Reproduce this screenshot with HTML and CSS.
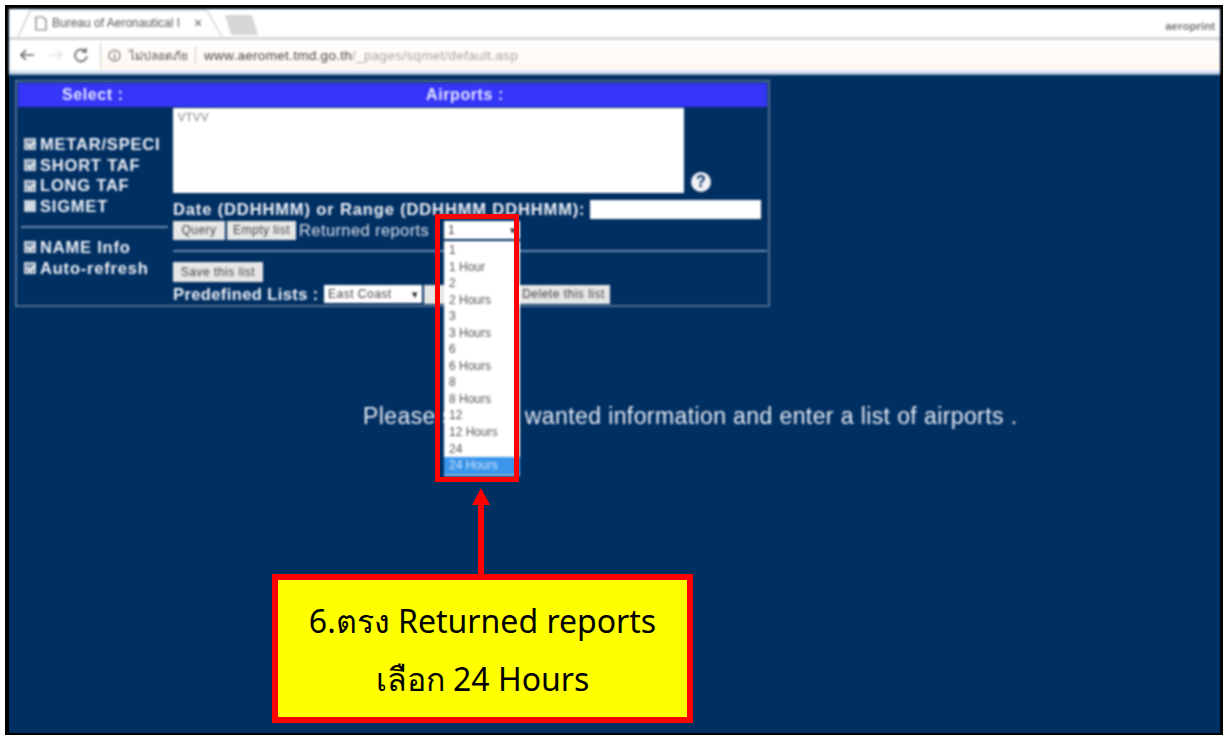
FILE: index.html
```html
<!DOCTYPE html>
<html lang="en">
<head>
<meta charset="utf-8">
<title>Bureau of Aeronautical Information</title>
<link rel="stylesheet" href="styles.css">
</head>
<body>
<div class="screen">
  <header class="browser soft">
    <div class="tabstrip">
      <div class="tab">
        <svg class="tab-shape" width="206" height="28" viewBox="0 0 206 28"><path d="M1 28 L13 2 Q14 1 16 1 H188 Q190 1 191 3 L205 28" fill="#fff" stroke="#d4d4d4" stroke-width="1.5"/></svg>
        <svg class="tab-page" width="12" height="15" viewBox="0 0 12 15"><path d="M1 1 H8 L11 4 V14 H1 Z" fill="#fff" stroke="#777" stroke-width="1.2"/></svg>
        <span class="tab-title">Bureau of Aeronautical I</span>
        <span class="tab-close">×</span>
      </div>
      <div class="newtab"></div>
      <span class="profile">aeroprint</span>
    </div>
    <div class="toolbar">
      <svg class="nav-icon back" width="18" height="14" viewBox="0 0 18 14"><path d="M16 7 H3 M8 2 L3 7 L8 12" fill="none" stroke="#666" stroke-width="1.7"/></svg>
      <svg class="nav-icon forward" width="18" height="14" viewBox="0 0 18 14"><path d="M2 7 H15 M10 2 L15 7 L10 12" fill="none" stroke="#e2e2e2" stroke-width="1.7"/></svg>
      <svg class="nav-icon" width="16" height="16" viewBox="0 0 16 16"><path d="M13 5 A6 6 0 1 0 14 9 M13 1 V5 H9" fill="none" stroke="#666" stroke-width="1.6"/></svg>
      <div class="omnibox">
        <svg width="13" height="13" viewBox="0 0 13 13"><circle cx="6.5" cy="6.5" r="5.5" fill="none" stroke="#666" stroke-width="1.1"/><path d="M6.5 5.5 V10 M6.5 3 V4.2" stroke="#666" stroke-width="1.3"/></svg>
        <span class="security">ไม่ปลอดภัย</span>
        <span class="url"><b>www.aeromet.tmd.go.th</b>/_pages/sqmet/default.asp</span>
      </div>
    </div>
  </header>

  <main class="page">
    <form class="panel soft">
      <div class="panel-head"><span class="head-select">Select :</span><span class="head-airports">Airports :</span></div>
      <div class="panel-body">
        <div class="options">
          <div class="opt-group first">
            <label class="opt"><i class="check on"></i>METAR/SPECI</label>
            <label class="opt"><i class="check on"></i>SHORT TAF</label>
            <label class="opt"><i class="check on"></i>LONG TAF</label>
            <label class="opt"><i class="check"></i>SIGMET</label>
          </div>
          <div class="opt-group">
            <label class="opt"><i class="check on"></i>NAME Info</label>
            <label class="opt"><i class="check on"></i>Auto-refresh</label>
          </div>
        </div>
        <div class="fields">
          <div class="airport-row">
            <div class="airports">VTVV</div>
            <span class="help">?</span>
          </div>
          <div class="date-row"><span>Date (DDHHMM) or Range (DDHHMM DDHHMM):</span><span class="date-input"></span></div>
          <div class="query-row">
            <span class="btn query">Query</span><span class="btn empty">Empty list</span>
            <span class="returned">Returned reports :</span>
            <span class="select returned-select">1<em>▾</em></span>
          </div>
          <div class="save-row"><span class="btn save">Save this list</span></div>
          <div class="lists-row">
            <span class="lists-label">Predefined Lists :</span>
            <span class="select east">East Coast<em>▾</em></span>
            <span class="btn add">Add</span>
            <span class="btn delete">Delete this list</span>
          </div>
        </div>
      </div>
    </form>
    <p class="notice soft"><span class="lead">Please select</span> wanted information and enter a list of airports .</p>
  </main>

  <ul class="dropdown soft">
    <li>1</li><li>1 Hour</li><li>2</li><li>2 Hours</li><li>3</li><li>3 Hours</li><li>6</li>
    <li>6 Hours</li><li>8</li><li>8 Hours</li><li>12</li><li>12 Hours</li><li>24</li><li class="picked">24 Hours</li>
  </ul>
  <div class="marker"></div>
  <svg class="arrow" width="20" height="88" viewBox="0 0 20 88"><path d="M10 0 L19 17 H13 V88 H7 V17 H1 Z" fill="#f00"/></svg>
  <div class="callout">
    <p>6.ตรง Returned reports</p>
    <p>เลือก 24 Hours</p>
  </div>
</div>
</body>
</html>
```

FILE: styles.css
```css
* { box-sizing: border-box; }
html, body { margin: 0; height: 100%; background: #fff; overflow: hidden; }
body { font-family: "Liberation Sans", Arial, sans-serif; }

.screen {
  position: relative;
  display: flex;
  flex-direction: column;
  width: 1218px;
  height: 730px;
  margin: 5px 0 0 5px;
  border: solid #000;
  border-width: 4px 3px 2px 4px;
  background: #002f62;
}

.soft { filter: blur(0.8px); }

/* browser window top */
.browser { flex: none; height: 66px; background: #fff; }
.tabstrip { position: relative; display: flex; align-items: flex-end; height: 31px; border-bottom: 3px solid #d6d6d6; }
.tab { position: relative; display: flex; align-items: center; width: 206px; height: 28px; margin-left: 8px; padding-left: 18px; }
.tab-shape { position: absolute; left: 0; top: 0; }
.tab-page { position: relative; margin-right: 5px; }
.tab-title { position: relative; width: 127px; overflow: hidden; white-space: nowrap; font-size: 12px; color: #555; }
.tab-close { position: relative; margin-left: 15px; font-size: 14px; color: #555; }
.newtab { width: 27px; height: 20px; margin: 0 0 2px 5px; background: #d6d6d6; transform: skewX(18deg); }
.profile { margin: 0 5px 5px auto; font-size: 11.5px; font-weight: bold; color: #777; }

.toolbar { display: flex; align-items: center; height: 30px; padding-left: 9px; }
.nav-icon { flex: none; }
.nav-icon.back { margin-right: 11px; }
.nav-icon.forward { margin-right: 8px; }
.omnibox { display: flex; align-items: center; gap: 8px; flex: 1; height: 27px; margin-left: 11px; padding-left: 7px; border-left: 1px solid #ccc; background: linear-gradient(#fff, #fff6ef); }
.security { width: 67px; padding-right: 8px; white-space: nowrap; border-right: 1px solid #ccc; color: #555; font-family: "Noto Sans", "Liberation Sans", sans-serif; font-size: 12px; }
.url { color: #a5a5a5; font-size: 13.5px; letter-spacing: 0.3px; }
.url b { font-weight: normal; color: #444; }
.browser::after { content: ""; display: block; height: 5px; background: linear-gradient(#f0f0f0, #c9dcf6 60%, #7d93ad); }

/* query form */
.page { flex: 1; display: flex; flex-direction: column; padding: 5px 0 0 6px; color: #fff; }
.panel { width: 755px; height: 227px; border: 2px solid #4f6f92; padding: 1px; }
.panel-head { display: flex; height: 24px; background: #3535f8; font-size: 16px; font-weight: bold; letter-spacing: 0.6px; line-height: 24px; color: #e6e7ff; }
.head-select { width: 152px; padding-left: 44px; }
.head-airports { width: 590px; text-align: center; }
.panel-body { display: flex; height: 196px; }

.options { flex: none; width: 153px; padding: 27px 3px 0 3px; font-size: 16.5px; font-weight: bold; letter-spacing: 0.8px; color: #f0f3fa; }
.opt-group.first { height: 94px; border-bottom: 2px solid #6c8bad; margin-bottom: 9px; }
.opt { display: flex; align-items: center; height: 20.7px; white-space: nowrap; padding-left: 3px; }
.check { position: relative; flex: none; width: 12px; height: 12px; margin-right: 4px; background: #d4dae5; border: 2px solid #c8d0dc; }
.check.on { background: #7f93aa; }
.check.on::after { content: ""; position: absolute; left: 1px; top: 1px; width: 6px; height: 3px; border: solid #f4f6fa; border-width: 0 0 2px 2px; transform: rotate(-45deg); }

.fields { flex: 1; min-width: 0; padding-left: 2px; font-size: 16.5px; }
.airport-row { display: flex; align-items: flex-end; height: 86px; padding-top: 1px; }
.airports { width: 511px; height: 85px; padding: 3px 5px; background: #fff; color: #777; font-size: 11px; letter-spacing: 0.5px; }
.help { display: flex; align-items: center; justify-content: center; width: 20px; height: 20px; margin: 0 0 1px 7px; border-radius: 50%; background: #f2f2f6; color: #002f62; font-size: 16px; font-weight: bold; }

.date-row { display: flex; align-items: center; gap: 5px; height: 28px; padding-top: 5px; font-weight: bold; letter-spacing: 0.87px; color: #f0f3fa; white-space: nowrap; }
.date-input { width: 171px; height: 19px; background: #fff; }

.query-row { display: flex; align-items: center; height: 31px; padding-bottom: 11px; border-bottom: 2px solid #6c8bad; }
.btn { display: inline-flex; align-items: center; justify-content: center; height: 19px; background: #e6e6e6; color: #444; font-size: 12px; letter-spacing: 0.5px; white-space: nowrap; }
.query { width: 52px; margin-right: 2px; }
.empty { width: 69px; margin-right: 3px; }
.returned { width: 145px; white-space: nowrap; letter-spacing: 0.4px; color: #dce3f0; }
.select { display: inline-flex; align-items: center; justify-content: space-between; height: 18px; padding: 0 4px; background: #fff; color: #444; font-size: 12px; letter-spacing: 0.5px; }
.select em { font-style: normal; font-size: 11px; color: #222; }
.returned-select { width: 76px; }

.save-row { display: flex; align-items: center; height: 31px; padding-top: 9px; }
.save { width: 90px; height: 20px; }
.lists-row { display: flex; align-items: center; height: 22px; }
.lists-label { width: 151px; font-size: 16.5px; font-weight: bold; letter-spacing: 0.4px; white-space: nowrap; color: #f0f3fa; }
.east { width: 98px; margin-right: 2px; }
.add { width: 93px; }
.delete { width: 93px; }

.notice { margin: 96px 0 0 348px; font-size: 23px; letter-spacing: 0.4px; white-space: nowrap; color: #e8edf6; }
.lead { margin-right: 13px; }

/* things drawn over the page */
.dropdown {
  position: absolute;
  left: 435px;
  top: 232px;
  width: 76px;
  height: 235px;
  margin: 0;
  padding: 1px 0 0;
  list-style: none;
  background: #fff;
  color: #555;
  font-size: 12px;
}
.dropdown li { height: 16.55px; padding-left: 5px; line-height: 16.5px; }
.dropdown .picked { height: 18px; background: #3a96ea; color: #cfe3fa; }

.marker { position: absolute; left: 426px; top: 205px; width: 84px; height: 268px; border: 5px solid #f00; }
.arrow { position: absolute; left: 462px; top: 479px; }

.callout {
  position: absolute;
  left: 263px;
  top: 565px;
  width: 421px;
  height: 149px;
  padding-top: 12px;
  border: 6px solid #f00;
  background: #ff0;
  color: #000;
  font-family: "Noto Sans", "Noto Sans CJK SC", sans-serif;
  font-size: 32px;
  line-height: 58px;
  text-align: center;
}
.callout p { margin: 0; }
```
